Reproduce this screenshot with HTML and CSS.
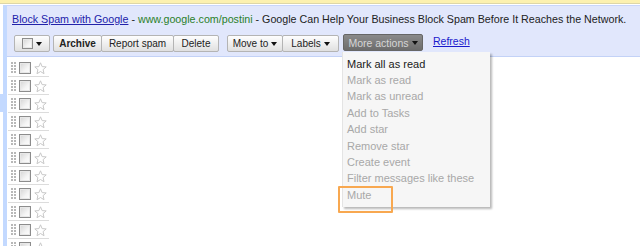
FILE: index.html
```html
<!DOCTYPE html>
<html>
<head>
<meta charset="utf-8">
<link rel="stylesheet" href="styles.css">
</head>
<body>
<div class="page">
  <div class="topbar"></div>
  <div class="main">
    <div class="gutter"><div class="nav-sel"></div></div>
    <div class="navline"></div>
    <div class="content">
      <div class="header">
        <div class="ad"><a class="ad-title">Block Spam with Google</a> - <span class="ad-url">www.google.com/postini</span> - Google Can Help Your Business Block Spam Before It Reaches the Network.</div>
        <div class="toolbar">
          <div class="btn w-sel"><span class="cb small"></span><span class="arrow"></span></div>
          <div class="group">
            <div class="btn w-archive bold">Archive</div>
            <div class="btn w-report">Report spam</div>
            <div class="btn w-delete">Delete</div>
          </div>
          <div class="group">
            <div class="btn w-move">Move to<span class="arrow"></span></div>
            <div class="btn w-labels">Labels<span class="arrow"></span></div>
          </div>
          <div class="more-wrap">
            <div class="btn w-more more">More actions<span class="arrow"></span></div>
            <div class="menu">
              <div class="item on">Mark all as read</div>
              <div class="item">Mark as read</div>
              <div class="item">Mark as unread</div>
              <div class="item">Add to Tasks</div>
              <div class="item">Add star</div>
              <div class="item">Remove star</div>
              <div class="item">Create event</div>
              <div class="item">Filter messages like these</div>
              <div class="item">Mute</div>
            </div>
          </div>
          <a class="refresh">Refresh</a>
        </div>
      </div>
      <div class="rows">
        <div class="row"><svg class="dots" width="5" height="11" viewBox="0 0 5 11"><g fill="#b8b8b8"><rect x="0" y="0" width="2" height="2"/><rect x="3" y="0" width="2" height="2"/><rect x="0" y="3" width="2" height="2"/><rect x="3" y="3" width="2" height="2"/><rect x="0" y="6" width="2" height="2"/><rect x="3" y="6" width="2" height="2"/><rect x="0" y="9" width="2" height="2"/><rect x="3" y="9" width="2" height="2"/></g></svg><span class="cb"></span><svg class="star" width="13" height="13" viewBox="0 0 13 13"><path d="M6.5 0.8 L8.1 4.6 L12.2 4.9 L9.1 7.6 L10.0 11.7 L6.5 9.5 L3.0 11.7 L3.9 7.6 L0.8 4.9 L4.9 4.6 Z" fill="#fff" stroke="#c8c8c8" stroke-width="1"/></svg></div>
        <div class="row"><svg class="dots" width="5" height="11" viewBox="0 0 5 11"><g fill="#b8b8b8"><rect x="0" y="0" width="2" height="2"/><rect x="3" y="0" width="2" height="2"/><rect x="0" y="3" width="2" height="2"/><rect x="3" y="3" width="2" height="2"/><rect x="0" y="6" width="2" height="2"/><rect x="3" y="6" width="2" height="2"/><rect x="0" y="9" width="2" height="2"/><rect x="3" y="9" width="2" height="2"/></g></svg><span class="cb"></span><svg class="star" width="13" height="13" viewBox="0 0 13 13"><path d="M6.5 0.8 L8.1 4.6 L12.2 4.9 L9.1 7.6 L10.0 11.7 L6.5 9.5 L3.0 11.7 L3.9 7.6 L0.8 4.9 L4.9 4.6 Z" fill="#fff" stroke="#c8c8c8" stroke-width="1"/></svg></div>
        <div class="row"><svg class="dots" width="5" height="11" viewBox="0 0 5 11"><g fill="#b8b8b8"><rect x="0" y="0" width="2" height="2"/><rect x="3" y="0" width="2" height="2"/><rect x="0" y="3" width="2" height="2"/><rect x="3" y="3" width="2" height="2"/><rect x="0" y="6" width="2" height="2"/><rect x="3" y="6" width="2" height="2"/><rect x="0" y="9" width="2" height="2"/><rect x="3" y="9" width="2" height="2"/></g></svg><span class="cb"></span><svg class="star" width="13" height="13" viewBox="0 0 13 13"><path d="M6.5 0.8 L8.1 4.6 L12.2 4.9 L9.1 7.6 L10.0 11.7 L6.5 9.5 L3.0 11.7 L3.9 7.6 L0.8 4.9 L4.9 4.6 Z" fill="#fff" stroke="#c8c8c8" stroke-width="1"/></svg></div>
        <div class="row"><svg class="dots" width="5" height="11" viewBox="0 0 5 11"><g fill="#b8b8b8"><rect x="0" y="0" width="2" height="2"/><rect x="3" y="0" width="2" height="2"/><rect x="0" y="3" width="2" height="2"/><rect x="3" y="3" width="2" height="2"/><rect x="0" y="6" width="2" height="2"/><rect x="3" y="6" width="2" height="2"/><rect x="0" y="9" width="2" height="2"/><rect x="3" y="9" width="2" height="2"/></g></svg><span class="cb"></span><svg class="star" width="13" height="13" viewBox="0 0 13 13"><path d="M6.5 0.8 L8.1 4.6 L12.2 4.9 L9.1 7.6 L10.0 11.7 L6.5 9.5 L3.0 11.7 L3.9 7.6 L0.8 4.9 L4.9 4.6 Z" fill="#fff" stroke="#c8c8c8" stroke-width="1"/></svg></div>
        <div class="row"><svg class="dots" width="5" height="11" viewBox="0 0 5 11"><g fill="#b8b8b8"><rect x="0" y="0" width="2" height="2"/><rect x="3" y="0" width="2" height="2"/><rect x="0" y="3" width="2" height="2"/><rect x="3" y="3" width="2" height="2"/><rect x="0" y="6" width="2" height="2"/><rect x="3" y="6" width="2" height="2"/><rect x="0" y="9" width="2" height="2"/><rect x="3" y="9" width="2" height="2"/></g></svg><span class="cb"></span><svg class="star" width="13" height="13" viewBox="0 0 13 13"><path d="M6.5 0.8 L8.1 4.6 L12.2 4.9 L9.1 7.6 L10.0 11.7 L6.5 9.5 L3.0 11.7 L3.9 7.6 L0.8 4.9 L4.9 4.6 Z" fill="#fff" stroke="#c8c8c8" stroke-width="1"/></svg></div>
        <div class="row"><svg class="dots" width="5" height="11" viewBox="0 0 5 11"><g fill="#b8b8b8"><rect x="0" y="0" width="2" height="2"/><rect x="3" y="0" width="2" height="2"/><rect x="0" y="3" width="2" height="2"/><rect x="3" y="3" width="2" height="2"/><rect x="0" y="6" width="2" height="2"/><rect x="3" y="6" width="2" height="2"/><rect x="0" y="9" width="2" height="2"/><rect x="3" y="9" width="2" height="2"/></g></svg><span class="cb"></span><svg class="star" width="13" height="13" viewBox="0 0 13 13"><path d="M6.5 0.8 L8.1 4.6 L12.2 4.9 L9.1 7.6 L10.0 11.7 L6.5 9.5 L3.0 11.7 L3.9 7.6 L0.8 4.9 L4.9 4.6 Z" fill="#fff" stroke="#c8c8c8" stroke-width="1"/></svg></div>
        <div class="row"><svg class="dots" width="5" height="11" viewBox="0 0 5 11"><g fill="#b8b8b8"><rect x="0" y="0" width="2" height="2"/><rect x="3" y="0" width="2" height="2"/><rect x="0" y="3" width="2" height="2"/><rect x="3" y="3" width="2" height="2"/><rect x="0" y="6" width="2" height="2"/><rect x="3" y="6" width="2" height="2"/><rect x="0" y="9" width="2" height="2"/><rect x="3" y="9" width="2" height="2"/></g></svg><span class="cb"></span><svg class="star" width="13" height="13" viewBox="0 0 13 13"><path d="M6.5 0.8 L8.1 4.6 L12.2 4.9 L9.1 7.6 L10.0 11.7 L6.5 9.5 L3.0 11.7 L3.9 7.6 L0.8 4.9 L4.9 4.6 Z" fill="#fff" stroke="#c8c8c8" stroke-width="1"/></svg></div>
        <div class="row"><svg class="dots" width="5" height="11" viewBox="0 0 5 11"><g fill="#b8b8b8"><rect x="0" y="0" width="2" height="2"/><rect x="3" y="0" width="2" height="2"/><rect x="0" y="3" width="2" height="2"/><rect x="3" y="3" width="2" height="2"/><rect x="0" y="6" width="2" height="2"/><rect x="3" y="6" width="2" height="2"/><rect x="0" y="9" width="2" height="2"/><rect x="3" y="9" width="2" height="2"/></g></svg><span class="cb"></span><svg class="star" width="13" height="13" viewBox="0 0 13 13"><path d="M6.5 0.8 L8.1 4.6 L12.2 4.9 L9.1 7.6 L10.0 11.7 L6.5 9.5 L3.0 11.7 L3.9 7.6 L0.8 4.9 L4.9 4.6 Z" fill="#fff" stroke="#c8c8c8" stroke-width="1"/></svg></div>
        <div class="row"><svg class="dots" width="5" height="11" viewBox="0 0 5 11"><g fill="#b8b8b8"><rect x="0" y="0" width="2" height="2"/><rect x="3" y="0" width="2" height="2"/><rect x="0" y="3" width="2" height="2"/><rect x="3" y="3" width="2" height="2"/><rect x="0" y="6" width="2" height="2"/><rect x="3" y="6" width="2" height="2"/><rect x="0" y="9" width="2" height="2"/><rect x="3" y="9" width="2" height="2"/></g></svg><span class="cb"></span><svg class="star" width="13" height="13" viewBox="0 0 13 13"><path d="M6.5 0.8 L8.1 4.6 L12.2 4.9 L9.1 7.6 L10.0 11.7 L6.5 9.5 L3.0 11.7 L3.9 7.6 L0.8 4.9 L4.9 4.6 Z" fill="#fff" stroke="#c8c8c8" stroke-width="1"/></svg></div>
        <div class="row"><svg class="dots" width="5" height="11" viewBox="0 0 5 11"><g fill="#b8b8b8"><rect x="0" y="0" width="2" height="2"/><rect x="3" y="0" width="2" height="2"/><rect x="0" y="3" width="2" height="2"/><rect x="3" y="3" width="2" height="2"/><rect x="0" y="6" width="2" height="2"/><rect x="3" y="6" width="2" height="2"/><rect x="0" y="9" width="2" height="2"/><rect x="3" y="9" width="2" height="2"/></g></svg><span class="cb"></span><svg class="star" width="13" height="13" viewBox="0 0 13 13"><path d="M6.5 0.8 L8.1 4.6 L12.2 4.9 L9.1 7.6 L10.0 11.7 L6.5 9.5 L3.0 11.7 L3.9 7.6 L0.8 4.9 L4.9 4.6 Z" fill="#fff" stroke="#c8c8c8" stroke-width="1"/></svg></div>
        <div class="row"><svg class="dots" width="5" height="11" viewBox="0 0 5 11"><g fill="#b8b8b8"><rect x="0" y="0" width="2" height="2"/><rect x="3" y="0" width="2" height="2"/><rect x="0" y="3" width="2" height="2"/><rect x="3" y="3" width="2" height="2"/><rect x="0" y="6" width="2" height="2"/><rect x="3" y="6" width="2" height="2"/><rect x="0" y="9" width="2" height="2"/><rect x="3" y="9" width="2" height="2"/></g></svg><span class="cb"></span><svg class="star" width="13" height="13" viewBox="0 0 13 13"><path d="M6.5 0.8 L8.1 4.6 L12.2 4.9 L9.1 7.6 L10.0 11.7 L6.5 9.5 L3.0 11.7 L3.9 7.6 L0.8 4.9 L4.9 4.6 Z" fill="#fff" stroke="#c8c8c8" stroke-width="1"/></svg></div>
      </div>
    </div>
  </div>
  <div class="mute-mark"></div>
</div>
</body>
</html>
```

FILE: styles.css
```css
* { box-sizing: border-box; }
html, body { margin: 0; padding: 0; background: #fff; }
body { font-family: "Liberation Sans", Arial, sans-serif; color: #222; }

.page { position: relative; width: 640px; height: 246px; overflow: hidden; background: #fff; }

.topbar { height: 5px; background: #fff; border-top: 3px solid #fcf1b0; border-bottom: 1px solid #fff; box-shadow: inset 0 1px 0 #ddd6a8; }

.main { display: flex; height: 241px; }
.gutter { width: 3px; flex: none; padding-top: 89px; }
.nav-sel { height: 18px; background: #c3d9ff; }
.navline { width: 4px; flex: none; background: #c3d9ff; }
.content { flex: 1; min-width: 0; }

.header { background: #e1e7fc; border-top: 1px solid #c9d6fb; border-bottom: 1px solid #c3d2f7; padding: 6px 0 4px 0; }

.ad { font-size: 10.7px; line-height: 15px; padding-left: 5px; white-space: nowrap; color: #222; }
.ad-title { color: #2222aa; text-decoration: underline; }
.ad-url { color: #2a7f2a; }

.toolbar { display: flex; align-items: flex-start; margin-top: 8px; padding-left: 7px; height: 17px; }
.group { display: flex; }
.group .btn + .btn { margin-left: -1px; }

.btn { height: 17px; display: flex; align-items: center; justify-content: center; font-size: 10px; color: #222; border: 1px solid #b4b4b4; border-radius: 2px; background: linear-gradient(#fefefe, #ececec 60%, #e0e0e0); white-space: nowrap; }
.bold { font-weight: bold; }

.w-sel { width: 36px; margin-right: 3px; gap: 3px; }
.w-archive { width: 49px; }
.w-report { width: 73px; }
.w-delete { width: 46px; }
.group + .group { margin-left: 8px; }
.w-move { width: 56px; gap: 3px; }
.w-labels { width: 57px; gap: 3px; }

.arrow { display: inline-block; width: 0; height: 0; border-left: 3px solid transparent; border-right: 3px solid transparent; border-top: 4px solid #111; margin-top: 1px; }

.more-wrap { position: relative; margin-left: 4px; }
.w-more { width: 80px; gap: 3px; margin-top: -1px; }
.more { background: linear-gradient(#8a8a8a, #6c6c6c); border-color: #666; color: #d6d6d6; font-size: 10.5px; }

.menu { position: absolute; left: -1px; top: 17px; width: 148px; padding: 3.5px 0 4px 4px; background: #f6f6f6; border-left: 1px solid #e4e4e4; box-shadow: 2px 2px 2px rgba(0,0,0,0.28); z-index: 5; }
.item { font-size: 11px; line-height: 16.4px; color: #a8a8a8; white-space: nowrap; }
.item.on { color: #1a1a1a; }

.refresh { margin-left: 10px; font-size: 10.5px; line-height: 15px; color: #1a1acc; text-decoration: underline; margin-top: -1px; }

.rows { padding-top: 2px; }
.row { width: 41px; margin-left: 1px; height: 18px; border-bottom: 1px solid #dcdcdc; display: flex; align-items: flex-start; padding: 3px 0 0 3px; }
.dots { flex: none; }
.cb { display: inline-block; flex: none; width: 12px; height: 12px; border: 1px solid #8c8c8c; background: linear-gradient(135deg, #d4d4d4, #f4f4f4 60%, #ffffff); margin-left: 3px; box-shadow: inset 0 0 0 1px #e8e8e8; }
.cb.small { width: 11px; height: 11px; margin-left: 0; }
.star { flex: none; margin-left: 3px; }

.mute-mark { position: absolute; left: 338px; top: 186px; width: 55px; height: 27px; border: 2px solid #f8a850; border-radius: 1px; z-index: 6; }
```
